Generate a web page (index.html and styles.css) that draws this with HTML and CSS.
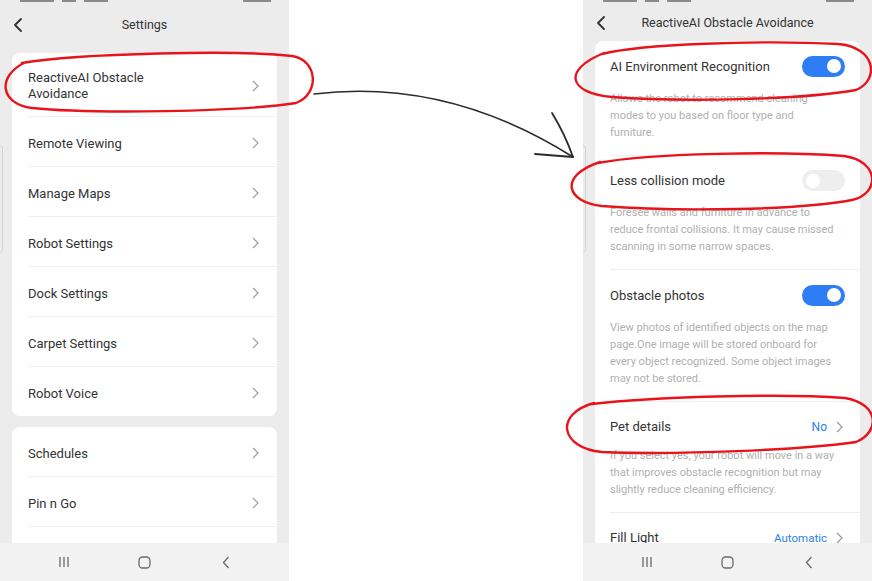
FILE: index.html
```html
<!DOCTYPE html>
<html>
<head>
<meta charset="utf-8">
<link rel="stylesheet" href="styles.css">
</head>
<body>
<div class="phone">
  <div class="handle"></div>
  <div class="status"><div class="bits"><i class="b1"></i><i class="b2"></i><i class="b3"></i></div><div class="bits"><i class="b4"></i></div></div>
  <div class="header h-left">
    <svg class="back" width="10" height="14" viewBox="0 0 10 14"><path d="M8 1 L2 7 L8 13" fill="none" stroke="#333" stroke-width="1.8" stroke-linecap="round" stroke-linejoin="round"/></svg>
    <div class="title">Settings</div>
    <div></div>
  </div>
  <div class="content c-left">
    <div class="card">
      <div class="row tall"><span>ReactiveAI Obstacle<br>Avoidance</span><svg class="chev" width="7" height="12" viewBox="0 0 7 12"><path d="M1 1 L6 6 L1 11" fill="none" stroke="#9a9a9a" stroke-width="1.2"/></svg></div>
      <div class="row"><span>Remote Viewing</span><svg class="chev" width="7" height="12" viewBox="0 0 7 12"><path d="M1 1 L6 6 L1 11" fill="none" stroke="#9a9a9a" stroke-width="1.2"/></svg></div>
      <div class="row"><span>Manage Maps</span><svg class="chev" width="7" height="12" viewBox="0 0 7 12"><path d="M1 1 L6 6 L1 11" fill="none" stroke="#9a9a9a" stroke-width="1.2"/></svg></div>
      <div class="row"><span>Robot Settings</span><svg class="chev" width="7" height="12" viewBox="0 0 7 12"><path d="M1 1 L6 6 L1 11" fill="none" stroke="#9a9a9a" stroke-width="1.2"/></svg></div>
      <div class="row"><span>Dock Settings</span><svg class="chev" width="7" height="12" viewBox="0 0 7 12"><path d="M1 1 L6 6 L1 11" fill="none" stroke="#9a9a9a" stroke-width="1.2"/></svg></div>
      <div class="row"><span>Carpet Settings</span><svg class="chev" width="7" height="12" viewBox="0 0 7 12"><path d="M1 1 L6 6 L1 11" fill="none" stroke="#9a9a9a" stroke-width="1.2"/></svg></div>
      <div class="row last"><span>Robot Voice</span><svg class="chev" width="7" height="12" viewBox="0 0 7 12"><path d="M1 1 L6 6 L1 11" fill="none" stroke="#9a9a9a" stroke-width="1.2"/></svg></div>
    </div>
    <div class="card card2">
      <div class="row"><span>Schedules</span><svg class="chev" width="7" height="12" viewBox="0 0 7 12"><path d="M1 1 L6 6 L1 11" fill="none" stroke="#9a9a9a" stroke-width="1.2"/></svg></div>
      <div class="row"><span>Pin n Go</span><svg class="chev" width="7" height="12" viewBox="0 0 7 12"><path d="M1 1 L6 6 L1 11" fill="none" stroke="#9a9a9a" stroke-width="1.2"/></svg></div>
      <div class="row"></div>
    </div>
  </div>
  <div class="navbar">
    <div class="nav-item"><svg width="12" height="12" viewBox="0 0 12 12"><path d="M2 1 V11 M6 1 V11 M10 1 V11" stroke="#6a6a6a" stroke-width="1.3"/></svg></div>
    <div class="nav-item"><svg width="13" height="13" viewBox="0 0 13 13"><rect x="1" y="1" width="11" height="11" rx="3.5" fill="none" stroke="#6a6a6a" stroke-width="1.3"/></svg></div>
    <div class="nav-item"><svg width="8" height="13" viewBox="0 0 8 13"><path d="M6.5 1 L1.5 6.5 L6.5 12" fill="none" stroke="#6a6a6a" stroke-width="1.3"/></svg></div>
  </div>
</div>

<div class="middle"></div>

<div class="phone">
  <div class="handle"></div>
  <div class="status"><div class="bits"><i class="b1"></i><i class="b2"></i><i class="b3"></i></div><div class="bits"><i class="b4"></i></div></div>
  <div class="header h-right">
    <svg class="back" width="10" height="14" viewBox="0 0 10 14"><path d="M8 1 L2 7 L8 13" fill="none" stroke="#333" stroke-width="1.8" stroke-linecap="round" stroke-linejoin="round"/></svg>
    <div class="title">ReactiveAI Obstacle Avoidance</div>
    <div></div>
  </div>
  <div class="content">
    <div class="card rcard">
      <div class="section">
        <div class="sec-head"><span>AI Environment Recognition</span><div class="toggle on"></div></div>
        <div class="desc">Allows the robot to recommend cleaning<br>modes to you based on floor type and<br>furniture.</div>
      </div>
      <div class="section">
        <div class="sec-head"><span>Less collision mode</span><div class="toggle"></div></div>
        <div class="desc">Foresee walls and furniture in advance to<br>reduce frontal collisions. It may cause missed<br>scanning in some narrow spaces.</div>
      </div>
      <div class="section">
        <div class="sec-head"><span>Obstacle photos</span><div class="toggle on"></div></div>
        <div class="desc">View photos of identified objects on the map<br>page.One image will be stored onboard for<br>every object recognized. Some object images<br>may not be stored.</div>
      </div>
      <div class="section">
        <div class="sec-head"><span>Pet details</span><div class="val"><span class="blue">No</span><svg class="chev" width="7" height="12" viewBox="0 0 7 12"><path d="M1 1 L6 6 L1 11" fill="none" stroke="#9a9a9a" stroke-width="1.2"/></svg></div></div>
        <div class="desc near">If you select yes, your robot will move in a way<br>that improves obstacle recognition but may<br>slightly reduce cleaning efficiency.</div>
      </div>
      <div class="section">
        <div class="sec-head"><span>Fill Light</span><div class="val"><span class="blue auto">Automatic</span><svg class="chev" width="7" height="12" viewBox="0 0 7 12"><path d="M1 1 L6 6 L1 11" fill="none" stroke="#9a9a9a" stroke-width="1.2"/></svg></div></div>
      </div>
    </div>
  </div>
  <div class="navbar">
    <div class="nav-item"><svg width="12" height="12" viewBox="0 0 12 12"><path d="M2 1 V11 M6 1 V11 M10 1 V11" stroke="#6a6a6a" stroke-width="1.3"/></svg></div>
    <div class="nav-item"><svg width="13" height="13" viewBox="0 0 13 13"><rect x="1" y="1" width="11" height="11" rx="3.5" fill="none" stroke="#6a6a6a" stroke-width="1.3"/></svg></div>
    <div class="nav-item"><svg width="8" height="13" viewBox="0 0 8 13"><path d="M6.5 1 L1.5 6.5 L6.5 12" fill="none" stroke="#6a6a6a" stroke-width="1.3"/></svg></div>
  </div>
</div>

<svg class="annot" width="872" height="581" viewBox="0 0 872 581">
  <g fill="none" stroke="#e8141c" stroke-width="2.4" stroke-linecap="round">
    <path d="M22 63 C 80 53, 240 50, 292 56 C 318 60, 320 94, 296 103 C 240 112, 90 114, 32 108 C 0 104, -4 76, 26 62"/>
    <path d="M602 54 C 640 44, 760 40, 838 44 C 876 47, 880 80, 856 90 C 800 100, 680 102, 612 97 C 568 93, 562 70, 604 53"/>
    <path d="M598 163 C 650 153, 780 151, 844 156 C 880 161, 880 194, 852 200 C 800 210, 680 212, 602 206 C 566 202, 558 176, 600 162"/>
    <path d="M592 404 C 650 397, 780 393, 845 398 C 880 404, 880 432, 856 442 C 800 450, 680 455, 602 452 C 560 448, 554 414, 594 403"/>
  </g>
  <g fill="none" stroke="#2a2a2a" stroke-linecap="round">
    <path d="M314 94 C 380 86, 470 92, 573 157" stroke-width="1.6"/>
    <path d="M552 113 C 560 126, 567 140, 573 157" stroke-width="1.8"/>
    <path d="M535 154 C 550 155, 562 156, 573 157" stroke-width="1.8"/>
  </g>
</svg>
</body>
</html>
```

FILE: styles.css
```css
* { box-sizing: border-box; }

html, body {
  margin: 0;
  padding: 0;
}

body {
  width: 872px;
  height: 581px;
  overflow: hidden;
  display: flex;
  position: relative;
  background: #ffffff;
  font-family: Roboto, "Liberation Sans", sans-serif;
  color: #333333;
}

.phone {
  width: 289px;
  height: 581px;
  background: #ececec;
  display: flex;
  flex-direction: column;
  position: relative;
  overflow: hidden;
}

.middle {
  width: 294px;
  background: #ffffff;
}

.handle {
  position: absolute;
  left: -9px;
  top: 144px;
  width: 12px;
  height: 110px;
  border: 1px solid #d2d2d2;
  border-radius: 5px;
}

.status {
  height: 4px;
  display: flex;
  justify-content: space-between;
  padding: 0 18px 0 20px;
  flex-shrink: 0;
}

.bits {
  display: flex;
  gap: 8px;
  align-items: flex-start;
}

.bits i {
  display: block;
  height: 2px;
  background: #8a8a8a;
}

.b1 { width: 34px; }
.b2 { width: 14px; }
.b3 { width: 24px; }
.b4 { width: 28px; }

.header {
  display: grid;
  grid-template-columns: 40px 1fr 40px;
  align-items: center;
  flex-shrink: 0;
}

.h-left { height: 41px; }
.h-right { height: 37px; }

.back {
  margin-left: 13px;
}

.title {
  text-align: center;
  font-size: 12.5px;
  color: #333;
}

.content {
  flex: 1;
  overflow: hidden;
  padding: 0 12px;
}

.c-left {
  padding-top: 8px;
}

.card {
  background: #ffffff;
  border-radius: 8px;
}

.card2 {
  margin-top: 11px;
}

.row {
  height: 50px;
  margin-left: 16px;
  padding-right: 18px;
  padding-top: 3px;
  display: flex;
  align-items: center;
  justify-content: space-between;
  border-bottom: 1px solid #efefef;
  font-size: 13px;
  color: #333;
}

.row.tall {
  height: 64px;
  line-height: 16px;
}

.row.last {
  border-bottom: none;
  height: 49px;
}

.rcard {
  padding-left: 15px;
}

.section {
  padding: 13px 15px 14px 0;
  border-bottom: 1px solid #efefef;
}

.sec-head {
  height: 24px;
  display: flex;
  align-items: center;
  justify-content: space-between;
  font-size: 13px;
  color: #333;
}

.desc {
  margin-top: 11.5px;
  font-size: 11px;
  line-height: 17px;
  color: #b0b0b0;
  white-space: nowrap;
}

.desc.near {
  margin-top: 8px;
}

.toggle {
  width: 43px;
  height: 21px;
  border-radius: 11px;
  background: #eeeeee;
  position: relative;
}

.toggle::after {
  content: "";
  position: absolute;
  top: 3.5px;
  left: 4px;
  width: 14px;
  height: 14px;
  border-radius: 50%;
  background: #ffffff;
}

.toggle.on {
  background: #2f7df4;
}

.toggle.on::after {
  left: auto;
  right: 4px;
}

.val {
  display: flex;
  align-items: center;
  gap: 9px;
  margin-right: 2px;
}

.blue {
  color: #2f7fe8;
  font-size: 12px;
}

.blue.auto {
  font-size: 11.5px;
}

.navbar {
  height: 38px;
  flex-shrink: 0;
  background: #f2f2f2;
  display: flex;
  justify-content: center;
  align-items: center;
}

.nav-item {
  width: 81px;
  display: flex;
  justify-content: center;
  align-items: center;
}

.annot {
  position: absolute;
  left: 0;
  top: 0;
  pointer-events: none;
}
```
